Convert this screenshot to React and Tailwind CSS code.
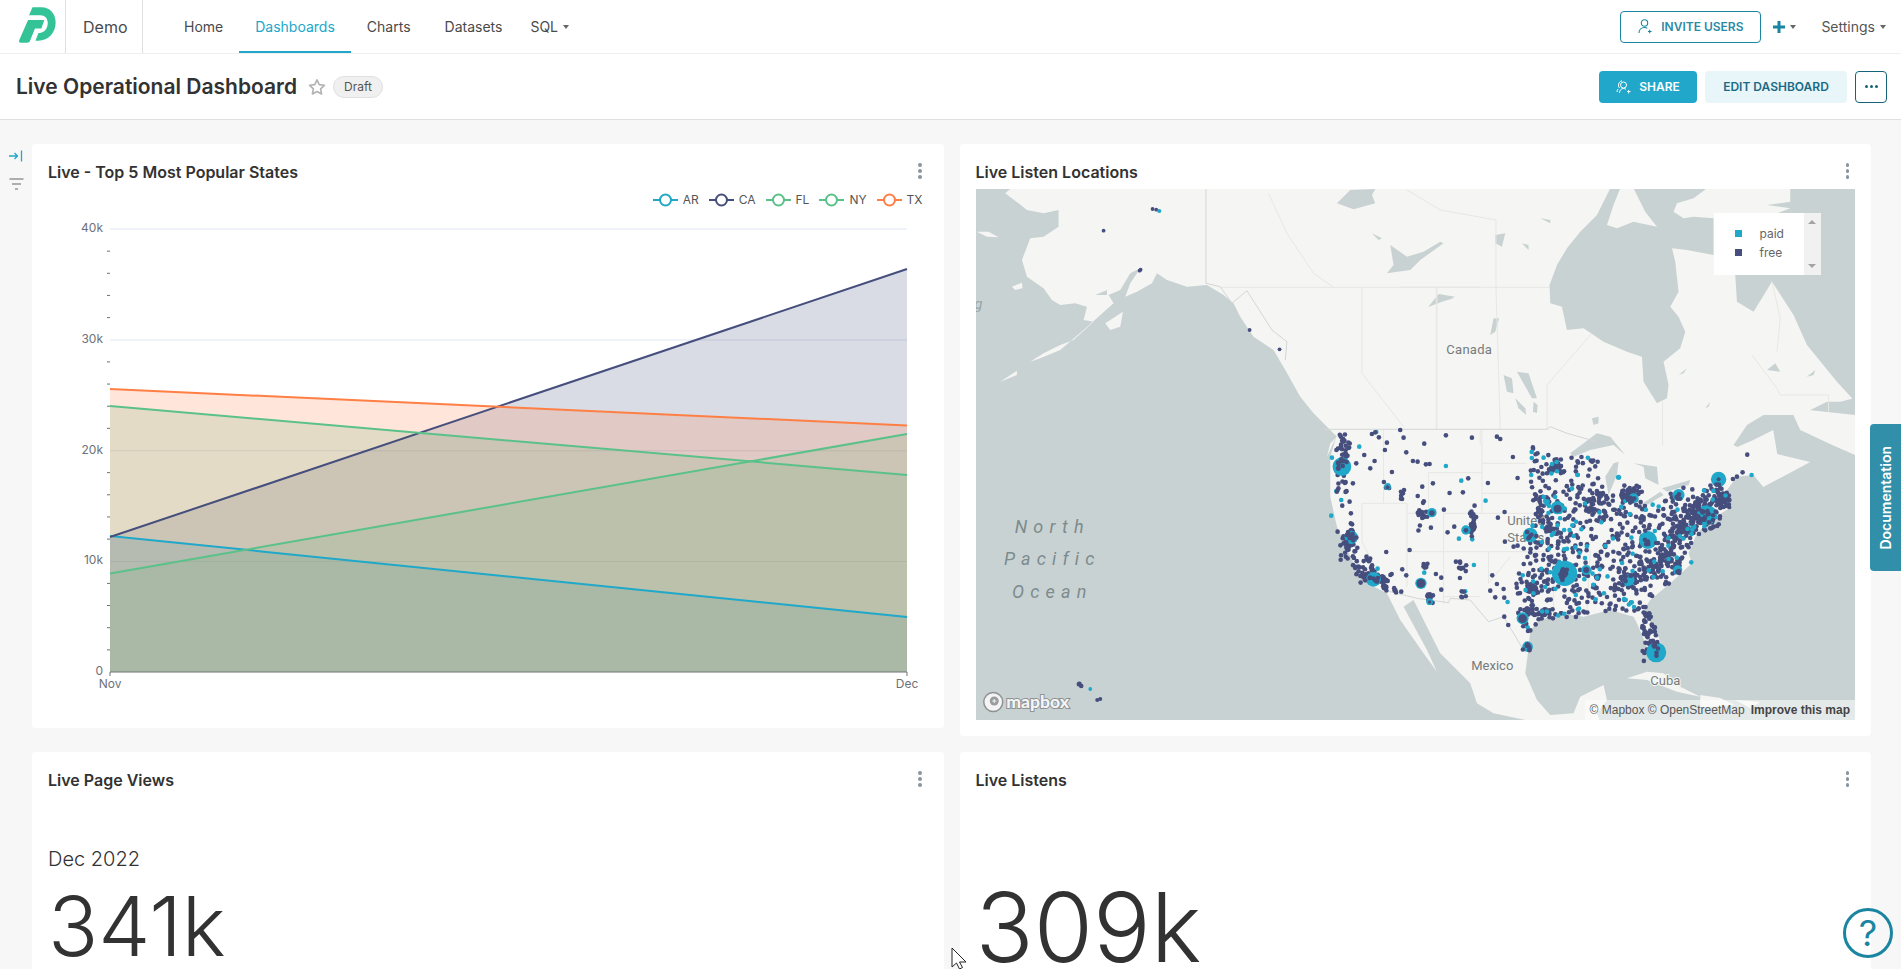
import React from "react";

const z3 = (a) => a.map(([x, y]) => [960 + x / 3, 180 + y / 3]);
const z4 = (a) => a.map(([x, y]) => [1280 + x / 3, 420 + y / 3]);
const z9 = (a) => a.map(([x, y]) => [1400 + x / 3, 185 + y / 3]);
const pts = (a) => a.map(([x, y]) => `${x.toFixed(1)},${y.toFixed(1)}`).join(" ");

const LAND = [
  [1010, 189], [1855, 189], [1855, 398],
  ...z9([[1320, 650], [1280, 650], [1200, 690], [1090, 690], [1040, 720], [1000, 780]]),
  [1737, 447], [1753, 440], [1773, 430], [1777, 454], [1810, 462], [1763, 487],
  ...z4([[1420, 165], [1370, 170], [1340, 210], [1355, 260], [1290, 300], [1250, 340], [1225, 400], [1235, 430], [1170, 490], [1110, 540], [1090, 570], [1130, 640], [1150, 690], [1130, 705], [1100, 680], [1070, 610], [1060, 590], [990, 570], [910, 590], [840, 580], [780, 600], [750, 630], [745, 685], [735, 760], [770, 840], [810, 885], [880, 880], [900, 830], [970, 795], [980, 840], [950, 880], [960, 905], [760, 905], [640, 880], [590, 850], [570, 790], [480, 700], [400, 540], [370, 560], [440, 690], [470, 755], [430, 700], [360, 600], [320, 520], [260, 490], [220, 430], [170, 320], [150, 230], [150, 110], [168, 50]]),
  ...z3([[1100, 830], [1110, 790], [1130, 770], [1100, 740], [1060, 700], [1020, 650], [975, 570], [940, 510], [880, 470], [840, 410], [820, 370], [790, 345], [740, 315], [680, 320], [620, 300], [590, 280], [575, 310], [530, 335], [495, 350], [510, 310], [540, 265], [510, 280], [480, 330], [445, 345], [460, 370], [370, 450], [300, 510], [240, 535], [210, 545], [250, 520], [300, 495], [340, 480], [400, 425], [370, 420], [380, 380], [345, 370], [300, 375], [275, 360], [250, 325], [200, 290], [185, 240], [210, 175], [250, 170], [295, 140], [295, 90], [250, 100], [200, 90], [175, 70], [135, 40]]),
];

const WATER = [
  z9([[630, 10], [590, 90], [540, 140], [500, 190], [470, 240], [448, 300], [450, 355], [485, 365], [500, 435], [550, 430], [610, 470], [680, 500], [725, 515], [730, 590], [770, 655], [800, 640], [805, 600], [790, 530], [840, 490], [855, 440], [835, 395], [810, 365], [835, 320], [825, 230], [815, 190], [860, 195], [940, 210], [940, 100], [880, 95], [850, 100], [820, 80], [830, 55], [880, 40], [920, 10], [700, 10], [735, 80], [770, 125], [700, 110], [650, 130], [620, 120], [640, 60], [660, 10]]),
  z9([[1170, 10], [1365, 10], [1365, 650], [1310, 590], [1220, 480], [1180, 390], [1115, 290], [1060, 380], [1010, 350], [1005, 270], [1090, 100], [1170, 70], [1100, 60], [1170, 50]]),
  z9([[350, 560], [385, 565], [410, 640], [395, 640]]), z9([[310, 570], [335, 580], [340, 625], [320, 620]]), z9([[345, 640], [375, 670], [378, 690], [355, 670]]), z9([[400, 650], [412, 660], [410, 685], [398, 680]]),
  z9([[270, 450], [280, 400], [297, 400], [285, 440]]), z9([[85, 365], [115, 330], [160, 340], [125, 350]]), z9([[575, 700], [595, 695], [595, 715], [580, 720]]),
  z9([[690, 190], [720, 170], [730, 185], [705, 205]]), z9([[775, 205], [790, 200], [785, 230], [772, 225]]), z9([[285, 150], [315, 145], [305, 185], [285, 175]]), z9([[365, 175], [385, 180], [385, 195]]), z9([[420, 100], [450, 105], [450, 115]]),
  z9([[1100, 555], [1125, 535], [1140, 560]]), z9([[1220, 575], [1245, 555], [1240, 570]]), z9([[835, 570], [860, 550], [850, 565]]), z9([[915, 670], [930, 650], [925, 665]]),
  z3([[1290, 195], [1340, 230], [1390, 215], [1440, 185], [1450, 190], [1380, 240], [1350, 270], [1280, 280], [1300, 255]]),
  z3([[1130, 70], [1170, 30], [1245, 27], [1235, 45], [1245, 70], [1180, 88]]),
  z3([[1405, 380], [1435, 342], [1485, 350], [1440, 365]]), z3([[1235, 160], [1265, 175], [1255, 180]]), z3([[405, 345], [440, 330], [440, 345]]),
  z4([[870, 100], [950, 40], [990, 50], [1035, 105], [1000, 75], [930, 90], [880, 110]]),
  z4([[985, 225], [975, 170], [1000, 130], [1015, 125], [1010, 165]]),
  z4([[1060, 130], [1130, 140], [1135, 195], [1095, 175], [1090, 140]]),
  z4([[1080, 255], [1140, 215], [1150, 225], [1100, 255]]), z4([[1145, 205], [1230, 180], [1225, 195], [1160, 215]]),
];

const WHITE_ISLANDS = [
  z3([[155, 320], [185, 308], [187, 325], [165, 330]]), z3([[50, 155], [85, 155], [115, 172], [80, 170]]), z3([[435, 430], [488, 395], [480, 440], [450, 450]]), z3([[120, 605], [170, 572], [170, 585]]),
  z4([[1040, 775], [1100, 755], [1150, 760], [1200, 800], [1260, 830], [1190, 815], [1100, 780]]),
  [[1700, 695], [1720, 698], [1735, 705], [1700, 708]], [[1735, 700], [1760, 702], [1750, 708]],
  [[1790, 408], [1855, 415], [1855, 455], [1832, 445], [1800, 430]],
];

const BORDERS = [
  z4([[130, 28], [800, 28], [810, 20], [860, 40], [950, 65]]),
  z4([[310, 510], [410, 535], [505, 548], [510, 535], [570, 540], [625, 605], [670, 590], [730, 690]]),
  z3([[737, 27], [737, 310], [780, 320], [815, 370], [860, 332], [935, 450], [980, 485], [975, 540]]),
];
const FAINT = [
  z3([[780, 322], [1560, 322]]), z3([[1205, 322], [1205, 580], [1330, 740]]), z3([[1430, 322], [1430, 745]]),
  z3([[925, 40], [980, 160], [1060, 280], [1120, 322]]), z9([[20, 15], [120, 75], [287, 105], [287, 307], [300, 732]]), z9([[0, 307], [447, 307]]), z9([[108, 307], [108, 732]]), z9([[240, 735], [240, 780]]),
  z9([[575, 445], [440, 600], [440, 735]]), z9([[787, 645], [787, 780]]), z9([[1055, 510], [1130, 610], [1140, 630], [1285, 630], [1285, 680]]), z9([[1115, 290], [1140, 400], [1130, 500]]),
  z4([[445, 158], [605, 158]]), z4([[605, 130], [740, 130]]), z4([[605, 220], [760, 220]]), z4([[245, 250], [380, 250]]), z4([[490, 280], [760, 280]]), z4([[380, 395], [800, 395]]), z4([[310, 30], [310, 250]]), z4([[445, 158], [445, 280], [380, 280]]), z4([[605, 28], [605, 280]]), z4([[490, 280], [490, 550]]), z4([[380, 250], [380, 500]]), z4([[625, 395], [625, 490], [690, 410]]), z4([[245, 250], [245, 365], [320, 510]]), z4([[600, 530], [490, 530]]), z4([[760, 220], [790, 320], [810, 400]]), z4([[820, 600], [820, 400]]), z4([[920, 570], [930, 390]]),
];

function rng(seed) {
  let a = seed;
  return () => {
    a |= 0; a = (a + 0x6d2b79f5) | 0;
    let t = Math.imul(a ^ (a >>> 15), 1 | a);
    t = (t + Math.imul(t ^ (t >>> 7), 61 | t)) ^ t;
    return ((t ^ (t >>> 14)) >>> 0) / 4294967296;
  };
}
const inside = (p, poly) => {
  let c = false;
  for (let i = 0, j = poly.length - 1; i < poly.length; j = i++) {
    const [xi, yi] = poly[i]; const [xj, yj] = poly[j];
    if (yi > p[1] !== yj > p[1] && p[0] < ((xj - xi) * (p[1] - yi)) / (yj - yi) + xi) c = !c;
  }
  return c;
};
const EAST = [[745, 95], [950, 110], [970, 200], [1100, 260], [1170, 220], [1240, 190], [1340, 215], [1350, 260], [1250, 340], [1225, 400], [1170, 490], [1110, 540], [1060, 580], [990, 570], [900, 590], [780, 600], [750, 640], [720, 620], [700, 480], [720, 400], [760, 300]];
const CLUSTERS = [
  [190, 75, 9, 18, 28], [178, 180, 10, 25, 14], [212, 352, 10, 22, 26], [200, 385, 12, 18, 18], [235, 435, 14, 18, 14], [270, 430, 8, 14, 10], [285, 475, 22, 8, 34], [312, 505, 4, 8, 8], [345, 508, 6, 4, 4],
  [448, 530, 8, 10, 8], [322, 200, 4, 4, 6], [368, 225, 5, 10, 6], [425, 280, 8, 22, 16], [580, 310, 5, 30, 20], [545, 440, 10, 10, 8], [430, 440, 8, 5, 5], [548, 532, 6, 8, 5],
  [755, 505, 12, 10, 28], [790, 585, 12, 8, 16], [745, 565, 8, 12, 10], [780, 275, 5, 8, 6], [812, 335, 6, 8, 8], [830, 145, 14, 12, 22], [765, 90, 6, 14, 4],
  [1105, 640, 12, 32, 36], [1270, 285, 30, 28, 110], [1320, 235, 14, 14, 40], [1200, 330, 22, 26, 50], [1045, 225, 18, 12, 44], [960, 250, 20, 20, 34], [1045, 480, 16, 14, 34], [1110, 450, 22, 16, 34], [1160, 420, 20, 18, 26], [1100, 575, 10, 10, 10],
];
const TOP_CLUSTERS = [[186, 135, 10, 10, 9], [852, 462, 6, 8, 12], [742, 680, 5, 4, 7], [1125, 680, 5, 18, 10], [1270, 285, 22, 20, 30], [1103, 355, 14, 12, 8], [1195, 225, 8, 8, 5], [280, 475, 14, 6, 10], [213, 350, 9, 12, 9], [750, 345, 10, 8, 5], [1060, 235, 8, 6, 5], [1045, 480, 9, 9, 7], [1192, 450, 7, 7, 3], [1315, 195, 7, 8, 3]];
const HAND = [[285, 37], [275, 42], [360, 30], [370, 53], [497, 46], [575, 53], [650, 50], [660, 57], [432, 71], [378, 97], [398, 123], [412, 125], [437, 133], [448, 132], [335, 156], [311, 186], [458, 190], [426, 200], [508, 219], [548, 217], [564, 175], [623, 189], [712, 174], [698, 111], [491, 269], [452, 323], [522, 320], [502, 337], [388, 390], [318, 396], [366, 448], [378, 466], [483, 473], [467, 462], [483, 509], [527, 425], [539, 474], [636, 466], [650, 492], [630, 512], [645, 532], [670, 507], [672, 533], [672, 590], [684, 615], [653, 293], [673, 276], [674, 365], [700, 380], [712, 377], [1401, 104], [1387, 157], [1370, 170], [1358, 177], [296, 52], [320, 68], [314, 90], [252, 105], [228, 130], [283, 123], [270, 145], [218, 190], [208, 245], [186, 257], [212, 280], [172, 335], [363, 515]];
const TEAL_HAND = [[155, 113], [237, 80], [288, 36], [497, 138], [543, 182], [616, 242], [183, 240], [153, 287], [168, 213], [432, 458], [581, 435], [536, 356], [576, 358], [555, 514], [292, 446], [790, 113], [1414, 165], [682, 546], [1233, 427], [742, 622]];

const navy = [];
const navyTop = [];
const teal = [];
const tealTop = [];
(() => {
  const r = rng(7);
  const g = () => (r() + r() + r() - 1.5) / 0.5;
  CLUSTERS.forEach(([x, y, sx, sy, n]) => {
    for (let i = 0; i < n; i++) navy.push([x + g() * sx, y + g() * sy]);
  });
  TOP_CLUSTERS.forEach(([x, y, sx, sy, n]) => {
    for (let i = 0; i < n; i++) navyTop.push([x + g() * sx, y + g() * sy]);
  });
  HAND.forEach((p) => navy.push(p));
  let c = 0;
  while (c < 600) {
    const p = [700 + r() * 660, 90 + r() * 550];
    if (inside(p, EAST)) { navy.push(p); c++; }
  }
  c = 0;
  while (c < 110) {
    const p = [700 + r() * 660, 90 + r() * 550];
    if (inside(p, EAST)) { tealTop.push(p); c++; }
  }
  TEAL_HAND.forEach((p) => teal.push(p));
})();
const BIG = [[185, 140, 28], [213, 352, 20], [280, 478, 22], [422, 490, 17], [455, 278, 14], [557, 330, 14], [832, 263, 20], [853, 460, 38], [918, 450, 15], [727, 595, 18], [742, 680, 16], [1128, 697, 30], [1103, 360, 27], [1315, 178, 23], [1195, 225, 18], [1280, 285, 30], [1060, 235, 15], [1192, 450, 14], [1045, 480, 18], [750, 345, 22], [322, 200, 10], [448, 545, 10], [1015, 172, 8]];
const BIG_CORE = [[832, 266, 12], [455, 279, 8], [557, 331, 7], [422, 490, 13], [727, 596, 13], [1315, 178, 6], [918, 450, 9], [448, 546, 5], [322, 202, 6]];

function MapArt() {
  return (
    <svg viewBox="976 189 879 531" className="block h-[531px] w-full bg-[#c9d2d3]">
      <polygon points={pts(LAND)} fill="#f5f5f3" />
      {WATER.map((w, i) => <polygon key={i} points={pts(w)} fill="#c9d2d3" />)}
      {WHITE_ISLANDS.map((w, i) => <polygon key={i} points={pts(w)} fill="#f5f5f3" />)}
      {FAINT.map((l, i) => <polyline key={i} points={pts(l)} fill="none" stroke="#e7e7e4" strokeWidth="1" />)}
      {BORDERS.map((l, i) => <polyline key={i} points={pts(l)} fill="none" stroke="#d4d6d6" strokeWidth="1" />)}
      <g fontFamily="Roboto, sans-serif" fill="#767b7c" fontSize="13" stroke="#f5f5f3" strokeWidth="2" paintOrder="stroke">
        <text x="1446" y="354" letterSpacing="0.3">Canada</text>
        <text x="1507" y="525">United</text>
        <text x="1507" y="542">States</text>
        <text x="1471" y="670">Mexico</text>
        <text x="1650" y="685">Cuba</text>
      </g>
      <g fontFamily="Roboto, sans-serif" fontStyle="italic" fill="#7c8b8d" fontSize="18" letterSpacing="6.2" textAnchor="middle">
        <text x="1052" y="533">North</text>
        <text x="1052" y="565">Pacific</text>
        <text x="1052" y="598">Ocean</text>
      </g>
      <text x="974" y="309" fontFamily="Roboto, sans-serif" fontStyle="italic" fill="#9aa5a7" fontSize="15">g</text>
      {teal.map(([x, y], i) => <circle key={i} cx={1280 + x / 3} cy={420 + y / 3} r="2.3" fill="#1fa8c9" />)}
      {navy.map(([x, y], i) => <circle key={i} cx={1280 + x / 3} cy={420 + y / 3} r="2.3" fill="#454e7c" />)}
      {tealTop.map(([x, y], i) => <circle key={i} cx={1280 + x / 3} cy={420 + y / 3} r="2.3" fill="#1fa8c9" />)}
      {BIG.map(([x, y, r], i) => <circle key={i} cx={1280 + x / 3} cy={420 + y / 3} r={r / 3} fill="#1fa8c9" />)}
      {navyTop.map(([x, y], i) => <circle key={i} cx={1280 + x / 3} cy={420 + y / 3} r="2.3" fill="#454e7c" />)}
      {BIG_CORE.map(([x, y, r], i) => <circle key={i} cx={1280 + x / 3} cy={420 + y / 3} r={r / 3} fill="#454e7c" />)}
      {z3([[430, 152], [577, 87], [588, 89], [541, 269], [538, 272], [868, 450], [958, 508]]).map(([x, y], i) => <circle key={i} cx={x} cy={y} r="1.9" fill="#454e7c" />)}
      <circle cx="1159" cy="211" r="2.1" fill="#1fa8c9" />
      <circle cx="1079" cy="684" r="2.6" fill="#454e7c" /><circle cx="1081" cy="686" r="2.3" fill="#454e7c" />
      <circle cx="1090" cy="689" r="1.9" fill="#1fa8c9" />
      <circle cx="1097" cy="700" r="2" fill="#454e7c" /><circle cx="1100" cy="699" r="2" fill="#454e7c" />
      <circle cx="993" cy="702" r="9.500" fill="#f4f4f4" stroke="#8f9293" strokeWidth="1.500" />
      <circle cx="994" cy="701" r="4.500" fill="#9a9d9e" />
      <path d="M994 699v4M992 701h4" stroke="#f4f4f4" strokeWidth="1" />
      <text x="1006" y="708" fontFamily="Lato, sans-serif" fontWeight="900" fontSize="17.5" fill="#f4f4f4" stroke="#8f9293" strokeWidth="2" paintOrder="stroke">mapbox</text>
    </svg>
  );
}

function Kebab() {
  return (
    <div className="flex flex-col gap-[2.5px]">
      <span className="h-[3.5px] w-[3.5px] rounded-full bg-[#8b949b]" />
      <span className="h-[3.5px] w-[3.5px] rounded-full bg-[#8b949b]" />
      <span className="h-[3.5px] w-[3.5px] rounded-full bg-[#8b949b]" />
    </div>
  );
}

function CardHead({ title, kebab = "mr-[6px]" }) {
  return (
    <div className="flex h-[29px] items-start justify-between">
      <span className="text-base font-semibold leading-6 text-[#323232]">{title}</span>
      <span className={kebab + " mt-[3px]"}><Kebab /></span>
    </div>
  );
}

const SERIES = [
  { n: "AR", c: "#1fa8c9", y0: 536, y1: 617 },
  { n: "CA", c: "#454e7c", y0: 537, y1: 269 },
  { n: "FL", c: "#5ac189", y0: 406, y1: 475 },
  { n: "NY", c: "#5ac189", y0: 573.5, y1: 434 },
  { n: "TX", c: "#ff7f44", y0: 389, y1: 425.5 },
];

function Chart() {
  const minor = [];
  for (let i = 1; i < 20; i++) if (i % 5 !== 0) minor.push(672 - (i * 443) / 20);
  return (
    <svg viewBox="48 212 880 515" className="block h-[515px] w-[880px] overflow-visible">
      {[229, 340, 450.75, 561.5].map((y) => <line key={y} x1="110" x2="907" y1={y} y2={y} stroke="#e0e6f1" />)}
      {minor.map((y) => <line key={y} x1="107" x2="110" y1={y} y2={y} stroke="#6e7079" strokeWidth="1" />)}
      {SERIES.map((s) => (
        <polygon key={s.n} points={`110,${s.y0} 907,${s.y1} 907,672 110,672`} fill={s.c} fillOpacity="0.2" />
      ))}
      {SERIES.map((s) => (
        <line key={s.n} x1="110" x2="907" y1={s.y0} y2={s.y1} stroke={s.c} strokeWidth="2" />
      ))}
      <line x1="110" x2="907" y1="672" y2="672" stroke="#6e7079" />
      <line x1="110" x2="110" y1="672" y2="676" stroke="#6e7079" />
      <line x1="907" x2="907" y1="672" y2="676" stroke="#6e7079" />
      <g fontFamily="Inter, sans-serif" fontSize="12" fill="#6e7079">
        <text x="103" y="232" textAnchor="end">40k</text>
        <text x="103" y="343" textAnchor="end">30k</text>
        <text x="103" y="454" textAnchor="end">20k</text>
        <text x="103" y="564" textAnchor="end">10k</text>
        <text x="103" y="675" textAnchor="end">0</text>
        <text x="110" y="688" textAnchor="middle">Nov</text>
        <text x="907" y="688" textAnchor="middle">Dec</text>
      </g>
    </svg>
  );
}

function LegendIcon({ c }) {
  return (
    <svg width="25" height="14" viewBox="0 0 25 14">
      <line x1="0" x2="25" y1="7" y2="7" stroke={c} strokeWidth="2" />
      <circle cx="12.5" cy="7" r="5.5" fill="#fff" stroke={c} strokeWidth="2" />
    </svg>
  );
}

function NavLink({ children, active, extra = "" }) {
  return (
    <a className={"flex h-[53px] items-center px-4 text-sm " + extra + (active ? " border-b-2 border-[#20a7c9] pt-[2px] text-[#20a7c9]" : " text-[#4a4a4a]")}>{children}</a>
  );
}

const Caret = ({ c = "#666" }) => (
  <svg width="6" height="4" viewBox="0 0 6 4" className="ml-[5px]"><path d="M0 0h6L3 4z" fill={c} /></svg>
);

export default function App() {
  return (
    <div className="relative h-screen w-full overflow-hidden bg-[#f7f7f7] font-['Inter',sans-serif] text-[#323232]">
      <nav className="flex h-[53px] items-center bg-white">
        <div className="flex h-full w-[66px] items-center border-r border-[#e0e0e0]">
          <svg width="66" height="53" viewBox="0 0 66 53">
            <path d="M33 7h9c9 0 14.500 7 14.500 15.500C56.500 33 49 41 39 41h-3l3-8h1c5 0 8.500-4.500 8.500-10C48.500 18 45.500 15 41 15H29.500z" fill="#33c397" />
            <path d="M28.500 20H45l-3 8.500h-6.500L30.500 41c-.5 1.500-1.500 2-3 2H21c-1.500 0-2-1-1.500-2.500z" fill="#33c397" />
          </svg>
        </div>
        <div className="flex h-full w-[77px] items-center border-r border-[#e0e0e0] pl-[17px] pt-px text-base text-[#4a4a4a]">Demo</div>
        <div className="ml-[25px] flex items-center">
          <NavLink>Home</NavLink>
          <NavLink active>Dashboards</NavLink>
          <NavLink>Charts</NavLink>
          <NavLink extra="ml-[2px]">Datasets</NavLink>
          <a className="flex h-[53px] items-center pl-[12px] text-sm text-[#4a4a4a]">SQL<Caret /></a>
        </div>
        <div className="ml-auto flex items-center pr-[15px]">
          <button className="flex h-[32px] w-[141px] items-center justify-center gap-[9px] rounded border border-[#1a85a0] text-xs font-semibold text-[#2b8aa6]">
            <svg width="14" height="15" viewBox="0 0 14 15" fill="none" stroke="#1a85a0" strokeWidth="1.100"><circle cx="6.500" cy="4" r="3.200" /><path d="M1 14c0-3 2-5.500 5.500-5.500 1 0 2 .2 2.800.7M10 12.500h3.500M11.700 10.700v3.500" /></svg>
            INVITE USERS
          </button>
          <span className="ml-3 flex items-center">
            <svg width="12" height="12" viewBox="0 0 12 12"><path d="M4.500 0h3v4.500H12v3H7.500V12h-3V7.500H0v-3h4.500z" fill="#1a85a0" /></svg>
            <Caret />
          </span>
          <span className="ml-[25px] flex items-center text-sm text-[#555]">Settings<Caret /></span>
        </div>
      </nav>
      <div className="h-px bg-[#f0f0f0]" />
      <header className="flex h-[66px] items-center border-b border-[#e0e0e0] bg-white pl-4 pr-[14px]">
        <h1 className="text-[21px] font-semibold text-[#323232]">Live Operational Dashboard</h1>
        <svg width="18" height="18" viewBox="0 0 24 24" fill="none" stroke="#b2b2b2" strokeWidth="2.200" strokeLinejoin="round" className="ml-[11px]"><path d="M12 2.500l3 6.300 6.800.9-5 4.700 1.300 6.800-6.100-3.300-6.100 3.300 1.300-6.800-5-4.700 6.800-.9z" /></svg>
        <span className="ml-[7px] flex h-[22px] w-[50px] items-center justify-center rounded-full border border-[#e0e0e0] bg-[#f0f0f0] text-xs text-[#555]">Draft</span>
        <div className="ml-auto flex items-center">
          <button className="flex h-[32px] w-[98px] items-center justify-center gap-2 rounded bg-[#20a7c9] text-xs font-semibold text-white">
            <svg width="15" height="14" viewBox="0 0 15 14" fill="none" stroke="#fff" strokeWidth="1"><circle cx="7.500" cy="5" r="3" /><path d="M3.500 13c0-2.500 1.500-4.500 4-4.500 1 0 1.800.3 2.500.8M3.500 8C1.500 6 2.500 1.500 6 .8M1 12c0-1 .3-2 1-3M11 11.500h3.500M12.700 10v3.500" /></svg>
            SHARE
          </button>
          <button className="ml-2 flex h-[32px] w-[142px] items-center justify-center rounded bg-[#e8f5f9] text-xs font-semibold text-[#1b6a85]">EDIT DASHBOARD</button>
          <button className="ml-2 flex h-[32px] w-[32px] items-center justify-center gap-[2px] rounded border border-[#156378]">
            <span className="h-[3px] w-[3px] rounded-full bg-[#156378]" />
            <span className="h-[3px] w-[3px] rounded-full bg-[#156378]" />
            <span className="h-[3px] w-[3px] rounded-full bg-[#156378]" />
          </button>
        </div>
      </header>
      <main className="flex">
        <aside className="flex w-[32px] flex-col items-center pt-[30px]">
          <svg width="14" height="12" viewBox="0 0 14 12" className="-ml-[1px]" fill="none" stroke="#20a7c9" strokeWidth="1.300"><path d="M0 6h8M5.500 3L8.500 6 5.500 9M12.500 0.500v11" /></svg>
          <svg width="15" height="13" viewBox="0 0 15 13" className="mt-[16px]" fill="none" stroke="#666" strokeWidth="1.200"><path d="M.5 1h14M3 6h9M6 11h3" /></svg>
        </aside>
        <div className="grid flex-1 grid-cols-2 items-start gap-4 pr-[30px] pt-6">
          <section className="h-[584px] rounded bg-white pl-4 pr-[15px] pt-[16px]">
            <CardHead title="Live - Top 5 Most Popular States" kebab="mr-[7px]" />
            <div className="flex h-[23px] items-start justify-end gap-[10px] pr-[6px] pt-[4px] text-xs leading-[14px] text-[#555]">
              {SERIES.map((s) => (
                <span key={s.n} className="flex items-center gap-[5px]"><LegendIcon c={s.c} />{s.n}</span>
              ))}
            </div>
            <Chart />
          </section>
          <section className="h-[592px] rounded bg-white px-4 pt-[16px]">
            <CardHead title="Live Listen Locations" />
            <div className="relative">
              <MapArt />
              <div className="absolute left-[738px] top-[24px] flex h-[62px] w-[107px] bg-white">
                <div className="flex-1 pl-[21px] pt-[11px] text-xs text-[#666]">
                  <div className="flex h-[19px] items-center gap-[18px]"><span className="h-[7px] w-[7px] bg-[#1fa8c9]" />paid</div>
                  <div className="flex h-[19px] items-center gap-[18px]"><span className="h-[7px] w-[7px] bg-[#454e7c]" />free</div>
                </div>
                <div className="flex w-[17px] flex-col items-center justify-between bg-[#f1f1f1] py-[7px]">
                  <svg width="8" height="4" viewBox="0 0 8 4"><path d="M0 4h8L4 0z" fill="#a3a3a3" /></svg>
                  <svg width="8" height="4" viewBox="0 0 8 4"><path d="M0 0h8L4 4z" fill="#a3a3a3" /></svg>
                </div>
              </div>
              <div className="absolute bottom-0 right-0 flex h-[20px] items-center gap-[6px] bg-white/50 pl-[5px] pr-[5px] font-['Liberation_Sans',sans-serif] text-xs text-[#555]">
                <span>© Mapbox © OpenStreetMap</span>
                <span className="font-bold text-[#444]">Improve this map</span>
              </div>
            </div>
          </section>
          <section className="h-[400px] rounded bg-white pl-4 pr-[15px] pt-[16px]">
            <CardHead title="Live Page Views" kebab="mr-[7px]" />
            <div className="mt-[48px] text-xl font-light leading-7 text-[#323232]">Dec 2022</div>
            <div className="mt-[22px] text-[83px] font-light leading-[0.75] text-[#323232]">341k</div>
          </section>
          <section className="h-[400px] rounded bg-white px-4 pt-[16px]">
            <CardHead title="Live Listens" />
            <div className="mt-[94px] text-[96px] font-light leading-[0.75] text-[#323232]">309k</div>
          </section>
        </div>
      </main>
      <div className="absolute right-0 top-[424px] flex h-[147px] w-[31px] items-center justify-center rounded-l bg-[#318fa9]">
        <span className="rotate-180 text-sm font-semibold text-white [writing-mode:vertical-rl]">Documentation</span>
      </div>
      <div className="absolute bottom-[11px] right-[8px] flex h-[50px] w-[50px] items-center justify-center rounded-full border-[3px] border-[#1a85a0] text-4xl text-[#1a85a0]">?</div>
      <svg width="20" height="24" viewBox="0 0 20 24" className="absolute left-[951px] top-[947px]"><path d="M1 1v19l4.500-4 3 6 3-1.500-3-5.500h6.500z" fill="#fff" stroke="#222" strokeWidth="1" /></svg>
    </div>
  );
}
